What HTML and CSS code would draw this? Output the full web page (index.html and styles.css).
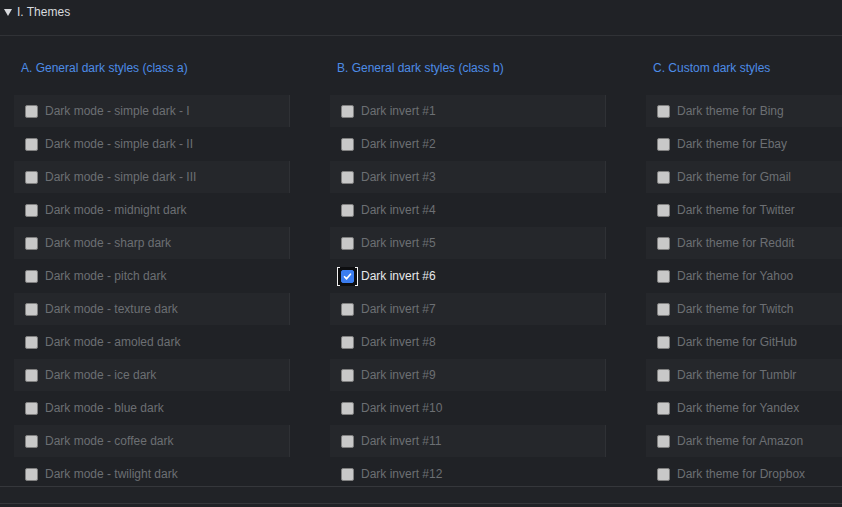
FILE: index.html
```html
<!DOCTYPE html>
<html>
<head>
<meta charset="utf-8">
<link rel="stylesheet" href="styles.css">
</head>
<body>
<div class="panel">
  <div class="section-head"><svg class="caret" viewBox="0 0 8 7" width="8" height="7"><polygon points="0,0 8,0 4,7" fill="#d8dade"/></svg><span>I. Themes</span></div>
  <div class="section-body">
    <div class="columns">
      <div class="col">
        <div class="col-title">A. General dark styles (class a)</div>
        <div class="row band"><span class="box"></span><span class="label">Dark mode - simple dark - I</span></div>
        <div class="row"><span class="box"></span><span class="label">Dark mode - simple dark - II</span></div>
        <div class="row band"><span class="box"></span><span class="label">Dark mode - simple dark - III</span></div>
        <div class="row"><span class="box"></span><span class="label">Dark mode - midnight dark</span></div>
        <div class="row band"><span class="box"></span><span class="label">Dark mode - sharp dark</span></div>
        <div class="row"><span class="box"></span><span class="label">Dark mode - pitch dark</span></div>
        <div class="row band"><span class="box"></span><span class="label">Dark mode - texture dark</span></div>
        <div class="row"><span class="box"></span><span class="label">Dark mode - amoled dark</span></div>
        <div class="row band"><span class="box"></span><span class="label">Dark mode - ice dark</span></div>
        <div class="row"><span class="box"></span><span class="label">Dark mode - blue dark</span></div>
        <div class="row band"><span class="box"></span><span class="label">Dark mode - coffee dark</span></div>
        <div class="row"><span class="box"></span><span class="label">Dark mode - twilight dark</span></div>
      </div>
      <div class="col">
        <div class="col-title">B. General dark styles (class b)</div>
        <div class="row band"><span class="box"></span><span class="label">Dark invert #1</span></div>
        <div class="row"><span class="box"></span><span class="label">Dark invert #2</span></div>
        <div class="row band"><span class="box"></span><span class="label">Dark invert #3</span></div>
        <div class="row"><span class="box"></span><span class="label">Dark invert #4</span></div>
        <div class="row band"><span class="box"></span><span class="label">Dark invert #5</span></div>
        <div class="row checked"><span class="focus"><span class="box on"><svg viewBox="0 0 13 13" width="13" height="13"><path d="M3 6.8 L5.4 9.2 L10 3.8" fill="none" stroke="#fff" stroke-width="2" stroke-linecap="round" stroke-linejoin="round"/></svg></span></span><span class="label">Dark invert #6</span></div>
        <div class="row band"><span class="box"></span><span class="label">Dark invert #7</span></div>
        <div class="row"><span class="box"></span><span class="label">Dark invert #8</span></div>
        <div class="row band"><span class="box"></span><span class="label">Dark invert #9</span></div>
        <div class="row"><span class="box"></span><span class="label">Dark invert #10</span></div>
        <div class="row band"><span class="box"></span><span class="label">Dark invert #11</span></div>
        <div class="row"><span class="box"></span><span class="label">Dark invert #12</span></div>
      </div>
      <div class="col">
        <div class="col-title">C. Custom dark styles</div>
        <div class="row band"><span class="box"></span><span class="label">Dark theme for Bing</span></div>
        <div class="row"><span class="box"></span><span class="label">Dark theme for Ebay</span></div>
        <div class="row band"><span class="box"></span><span class="label">Dark theme for Gmail</span></div>
        <div class="row"><span class="box"></span><span class="label">Dark theme for Twitter</span></div>
        <div class="row band"><span class="box"></span><span class="label">Dark theme for Reddit</span></div>
        <div class="row"><span class="box"></span><span class="label">Dark theme for Yahoo</span></div>
        <div class="row band"><span class="box"></span><span class="label">Dark theme for Twitch</span></div>
        <div class="row"><span class="box"></span><span class="label">Dark theme for GitHub</span></div>
        <div class="row band"><span class="box"></span><span class="label">Dark theme for Tumblr</span></div>
        <div class="row"><span class="box"></span><span class="label">Dark theme for Yandex</span></div>
        <div class="row band"><span class="box"></span><span class="label">Dark theme for Amazon</span></div>
        <div class="row"><span class="box"></span><span class="label">Dark theme for Dropbox</span></div>
      </div>
    </div>
  </div>
  <div class="next-strip"></div>
</div>
</body>
</html>
```

FILE: styles.css
```css
html, body {
  margin: 0;
  padding: 0;
  background: #202226;
  overflow: hidden;
  width: 842px;
  height: 507px;
}
body {
  font-family: "Liberation Sans", Arial, sans-serif;
  font-size: 12px;
  color: #6c6f73;
}
.panel {
  width: 842px;
  overflow: hidden;
}
.section-head {
  box-sizing: border-box;
  display: flex;
  align-items: center;
  padding: 0 0 11px 4px;
  color: #d8dade;
  font-size: 12px;
  border-bottom: 1px solid #303236;
  height: 36px;
}
.caret {
  display: block;
  flex: none;
  margin-right: 5px;
  margin-top: 1px;
}
.section-body {
  overflow: hidden;
  border-bottom: 1px solid #35373b;
  box-sizing: border-box;
  height: 451px;
}
.columns {
  display: grid;
  grid-template-columns: 276px 276px 276px;
  column-gap: 40px;
  padding-left: 14px;
  padding-top: 23px;
}
.col-title {
  color: #4d8ce6;
  height: 36px;
  padding-left: 7px;
  padding-top: 1px;
  line-height: 16px;
  box-sizing: border-box;
}
.row {
  height: 32px;
  margin-bottom: 1px;
  display: flex;
  align-items: center;
  padding-left: 11px;
  box-sizing: border-box;
  border-right: 1px solid transparent;
}
.row.band {
  background: #25272b;
  border-right-color: #2f3135;
}
.box {
  width: 13px;
  height: 13px;
  box-sizing: border-box;
  background: #c8c8c8;
  border: 1px solid #808080;
  border-radius: 2px;
  margin-right: 7px;
  flex: none;
  display: flex;
  align-items: center;
  justify-content: center;
}
.box.on {
  background: #3b7df0;
  border-color: #3b7df0;
  margin-right: 0;
}
.box.on svg {
  display: block;
}
.checked {
  padding-left: 7px;
}
.focus {
  position: relative;
  width: 21px;
  height: 19px;
  box-sizing: border-box;
  background: #0d0e10;
  border-left: 1px solid #f2f2f2;
  border-right: 1px solid #f2f2f2;
  display: flex;
  align-items: center;
  justify-content: center;
  margin-right: 3px;
  flex: none;
}
.focus::before,
.focus::after {
  content: "";
  position: absolute;
  left: -1px;
  right: -1px;
  height: 1px;
  border-left: 3px solid #f2f2f2;
  border-right: 3px solid #f2f2f2;
  box-sizing: border-box;
}
.focus::before { top: 0; }
.focus::after { bottom: 0; }
.checked .label {
  color: #e6e8ea;
}
.next-strip {
  height: 16px;
  border-bottom: 1px solid #35373b;
  background: #212327;
}
```
